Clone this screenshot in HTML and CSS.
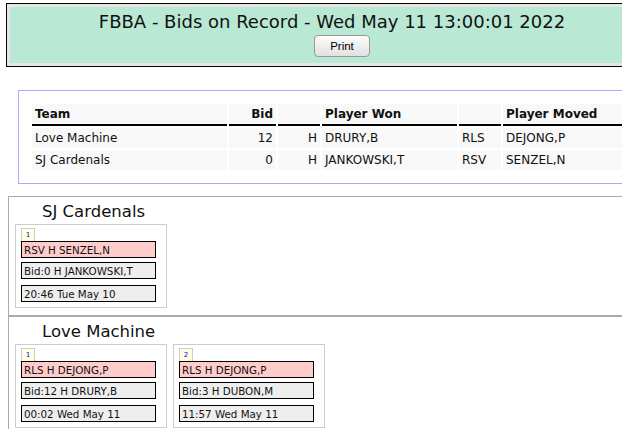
FILE: index.html
```html
<!DOCTYPE html>
<html>
<head>
<meta charset="utf-8">
<title>FBBA - Bids on Record</title>
<link rel="stylesheet" href="styles.css">
</head>
<body>
<div class="page">
  <div class="header">
    <div class="header-inner">
      <div class="title">FBBA - Bids on Record - Wed May 11 13:00:01 2022</div>
      <button class="print" type="button">Print</button>
    </div>
  </div>

  <div class="bids">
    <table class="bid-table">
      <colgroup>
        <col class="c-team"><col class="c-bid"><col class="c-pos"><col class="c-won"><col class="c-pos"><col class="c-moved">
      </colgroup>
      <thead>
        <tr><th>Team</th><th class="num">Bid</th><th></th><th>Player Won</th><th></th><th>Player Moved</th></tr>
      </thead>
      <tbody>
        <tr><td>Love Machine</td><td class="num">12</td><td class="num">H</td><td>DRURY,B</td><td>RLS</td><td>DEJONG,P</td></tr>
        <tr><td>SJ Cardenals</td><td class="num">0</td><td class="num">H</td><td>JANKOWSKI,T</td><td>RSV</td><td>SENZEL,N</td></tr>
      </tbody>
    </table>
  </div>

  <div class="team">
    <div class="team-name">SJ Cardenals</div>
    <div class="cards">
      <div class="card">
        <div class="badge">1</div>
        <div class="line moved">RSV H SENZEL,N</div>
        <div class="line bid">Bid:0 H JANKOWSKI,T</div>
        <div class="line time">20:46 Tue May 10</div>
      </div>
    </div>
  </div>

  <div class="team">
    <div class="team-name">Love Machine</div>
    <div class="cards">
      <div class="card">
        <div class="badge">1</div>
        <div class="line moved">RLS H DEJONG,P</div>
        <div class="line bid">Bid:12 H DRURY,B</div>
        <div class="line time">00:02 Wed May 11</div>
      </div>
      <div class="card">
        <div class="badge">2</div>
        <div class="line moved">RLS H DEJONG,P</div>
        <div class="line bid">Bid:3 H DUBON,M</div>
        <div class="line time">11:57 Wed May 11</div>
      </div>
    </div>
  </div>
</div>
</body>
</html>
```

FILE: styles.css
```css
html, body {
  margin: 0;
  padding: 0;
  background: #fff;
  overflow: hidden;
}

.page {
  width: 680px;
  padding-top: 3px;
  font-family: "DejaVu Sans", Verdana, sans-serif;
  color: #111;
}

.header {
  box-sizing: border-box;
  width: 672px;
  margin-left: 6px;
  border: 1px solid #000;
  padding: 3px;
  background: #e6e6e6;
}

.header-inner {
  background: #b9e8d5;
  padding: 5px 0 6px;
  text-align: center;
}

.title {
  font-size: 18px;
  line-height: 20px;
  padding-right: 20px;
  color: #111;
}

.print {
  display: block;
  box-sizing: border-box;
  width: 56px;
  height: 22px;
  margin: 3px auto 0;
  padding: 0;
  border: 1px solid #9a9a9a;
  border-radius: 4px;
  background: linear-gradient(#fdfdfd, #e0e0e0);
  font-family: "Liberation Sans", Arial, sans-serif;
  font-size: 11.5px;
  color: #000;
}

.bids {
  box-sizing: border-box;
  width: 660px;
  margin: 23px 0 0 18px;
  border: 1px solid #aaaaff;
  padding: 11px;
}

.bid-table {
  table-layout: fixed;
  width: 635px;
  border-collapse: separate;
  border-spacing: 2px;
  font-size: 12px;
}

.c-team { width: 195px; }
.c-bid { width: 47px; }
.c-pos { width: 42px; }
.c-won { width: 135px; }
.c-moved { width: 160px; }

.bid-table th,
.bid-table td {
  background: #f8f8f8;
  padding: 0 3px;
  line-height: 20px;
  text-align: left;
  white-space: nowrap;
}

.bid-table th {
  font-weight: bold;
  border-bottom: 2px solid #000;
}

.bid-table .num {
  text-align: right;
}

.team {
  box-sizing: border-box;
  width: 670px;
  margin-left: 8px;
  border: 1px solid #aaa;
  padding: 5px 0 7px 6px;
}

.bids + .team {
  margin-top: 12px;
}

.team-name {
  font-size: 16.5px;
  line-height: 19px;
  padding-left: 27px;
  margin-bottom: 3px;
}

.cards {
  display: flex;
  gap: 6px;
}

.card {
  box-sizing: border-box;
  width: 152px;
  border: 1px solid #ccc;
  padding: 3px 5px 5px;
}

.badge {
  box-sizing: border-box;
  width: 14px;
  height: 13px;
  border: 1px solid #ccc;
  border-bottom: 0;
  background: #ffffe0;
  color: #0000ff;
  font-size: 7px;
  line-height: 12px;
  text-align: center;
}

.line {
  box-sizing: border-box;
  width: 135px;
  border: 1px solid #000;
  padding: 3px 2px 1px 2px;
  font-size: 10.3px;
  line-height: 11px;
  white-space: nowrap;
  color: #111;
}

.moved {
  background: #ffcccc;
  margin-bottom: 4px;
}

.bid {
  background: #eeeeee;
  margin-bottom: 6px;
}

.time {
  background: #eeeeee;
}
```
